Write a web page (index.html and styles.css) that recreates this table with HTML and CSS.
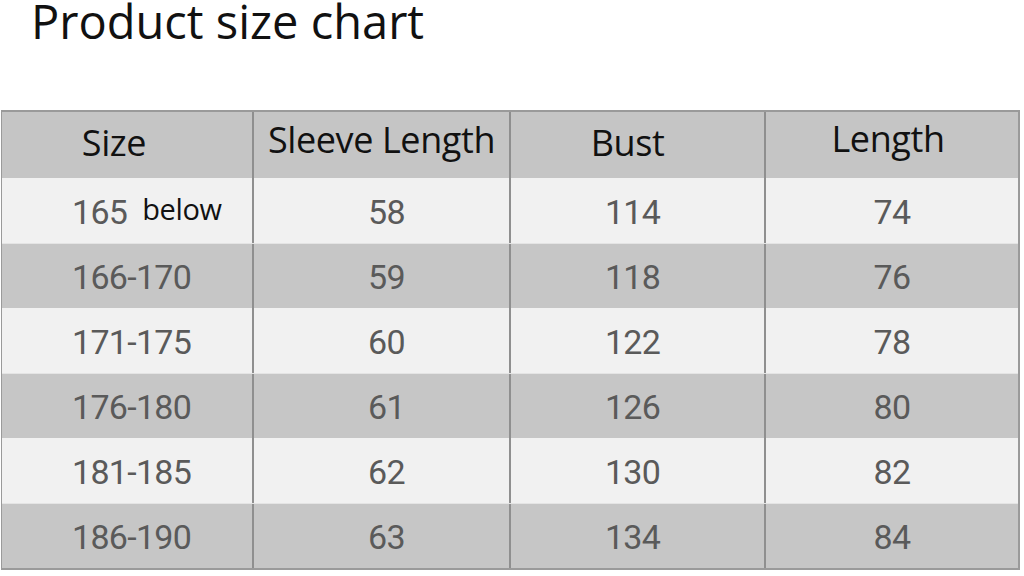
FILE: index.html
```html
<!DOCTYPE html>
<html>
<head>
<meta charset="utf-8">
<link rel="stylesheet" href="styles.css">
</head>
<body>
<h1 class="title">Product size chart</h1>
<div class="chart">
  <div class="row head">
    <div class="cell c1"><span class="h-size">Size</span></div>
    <div class="cell c2"><span class="h-sleeve">Sleeve Length</span></div>
    <div class="cell c3"><span class="h-bust">Bust</span></div>
    <div class="cell c4"><span class="h-length">Length</span></div>
  </div>
  <div class="row light">
    <div class="cell c1 left">165 <span class="below">below</span></div>
    <div class="cell c2">58</div>
    <div class="cell c3">114</div>
    <div class="cell c4">74</div>
  </div>
  <div class="row dark">
    <div class="cell c1 left">166-170</div>
    <div class="cell c2">59</div>
    <div class="cell c3">118</div>
    <div class="cell c4">76</div>
  </div>
  <div class="row light">
    <div class="cell c1 left">171-175</div>
    <div class="cell c2">60</div>
    <div class="cell c3">122</div>
    <div class="cell c4">78</div>
  </div>
  <div class="row dark">
    <div class="cell c1 left">176-180</div>
    <div class="cell c2">61</div>
    <div class="cell c3">126</div>
    <div class="cell c4">80</div>
  </div>
  <div class="row light">
    <div class="cell c1 left">181-185</div>
    <div class="cell c2">62</div>
    <div class="cell c3">130</div>
    <div class="cell c4">82</div>
  </div>
  <div class="row dark">
    <div class="cell c1 left">186-190</div>
    <div class="cell c2">63</div>
    <div class="cell c3">134</div>
    <div class="cell c4">84</div>
  </div>
</div>
</body>
</html>
```
FILE: styles.css
```css
html, body {
  margin: 0;
  padding: 0;
  background: #ffffff;
}
body {
  width: 1024px;
  height: 576px;
}
.title {
  margin: 0;
  padding: 0 0 0 31px;
  height: 110px;
  font-family: "Open Sans", "Noto Sans", sans-serif;
  font-weight: 400;
  font-size: 47px;
  line-height: 42px;
  color: #111111;
}
.chart {
  width: 1016px;
  margin-left: 1px;
  border: 2px solid #9a9a9a;
  border-left-width: 1px;
  display: flex;
  flex-direction: column;
}
.row {
  display: grid;
  grid-template-columns: 252px 257px 255px 1fr;
  height: 65px;
}
.row.head {
  height: 66px;
  background: #c5c5c5;
}
.row.light { background: #f1f1f1; }
.row.dark { background: #c6c6c6; border-top: 1px solid #e4e4e4; }
.row.light + .row.dark { height: 64px; }
.cell {
  display: flex;
  align-items: center;
  justify-content: center;
  font-family: "Roboto", "Liberation Sans", sans-serif;
  font-weight: 400;
  font-size: 34px;
  letter-spacing: -0.7px;
  color: #5a5a5a;
  border-right: 2px solid #8f8f8f;
  padding-top: 2px;
  box-sizing: border-box;
}
.cell.c4 { border-right: none; }
.cell.left {
  justify-content: flex-start;
  padding-left: 70px;
}
.c2 { padding-left: 10px; }
.c3 { padding-right: 10px; }
.head .cell {
  font-family: "Open Sans", "Noto Sans", sans-serif;
  font-size: 36px;
  color: #111111;
  letter-spacing: -0.4px;
  padding-top: 0;
}
.head .c1 { padding-right: 26px; padding-bottom: 6px; }
.head .c2 { padding-left: 0; padding-bottom: 12px; }
.head .c3 { padding-right: 20px; padding-bottom: 6px; }
.head .c4 { padding-right: 8px; padding-bottom: 14px; }
.below {
  font-family: "Open Sans", "Noto Sans", sans-serif;
  font-size: 29px;
  letter-spacing: -0.4px;
  color: #111111;
  margin-left: 15px;
  margin-top: -6px;
}
```
